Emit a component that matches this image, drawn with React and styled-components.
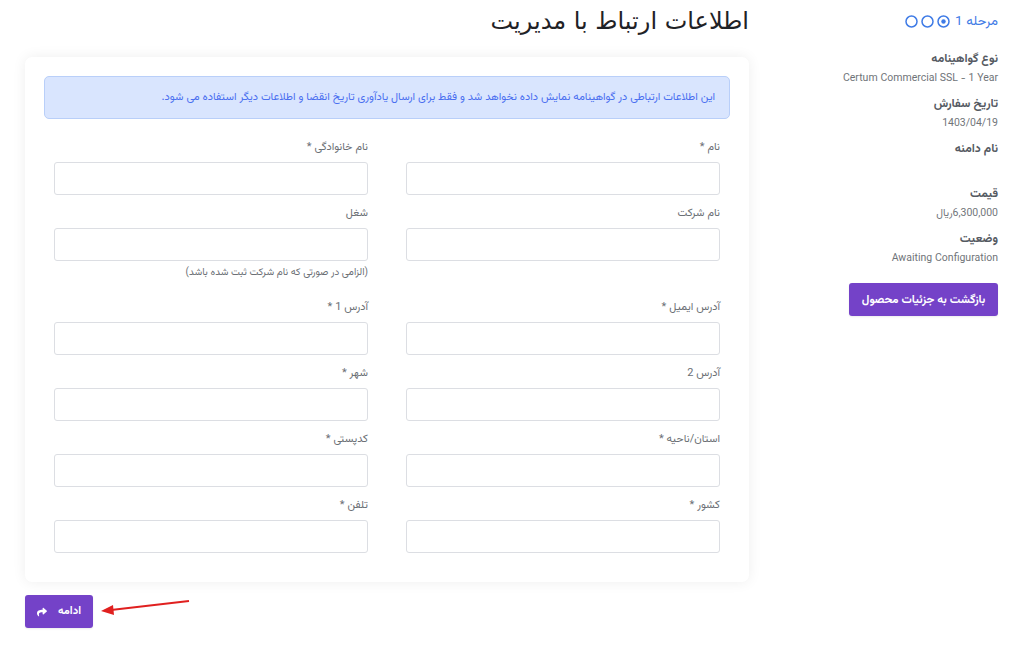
import React from "react";
import styled, { createGlobalStyle } from "styled-components";
import { FaShare } from "react-icons/fa";

const GlobalStyle = createGlobalStyle`
  html, body {
    margin: 0;
    padding: 0;
    background: #ffffff;
  }
  body {
    font-family: "Vazirmatn", "Noto Sans", "Noto Sans Arabic", "DejaVu Sans", sans-serif;
  }
  * {
    box-sizing: border-box;
  }
`;

const Page = styled.div`
  direction: rtl;
  display: grid;
  grid-template-columns: 220px 724px;
  column-gap: 29px;
  padding: 0 26px 0 25px;
  width: 1024px;
  height: 654px;
`;

const Sidebar = styled.aside`
  display: flex;
  flex-direction: column;
  align-items: flex-start;
  padding-top: 11px;
`;

const Step = styled.div`
  display: flex;
  align-items: center;
  gap: 3px;
  color: #3f7be6;
  font-size: 13.5px;
  height: 20px;
  margin-bottom: 19px;
`;

const Circles = styled.span`
  display: flex;
  gap: 3px;
  margin-right: 2px;
`;

const InfoGroup = styled.div`
  display: flex;
  flex-direction: column;
  margin-bottom: 7px;
`;

const InfoLabel = styled.div`
  font-size: 12px;
  font-weight: 700;
  color: #555a62;
  line-height: 19px;
`;

const InfoValue = styled.div`
  font-size: 10.5px;
  color: #707479;
  line-height: 19px;
  min-height: 19px;
`;

const PurpleButton = styled.button`
  display: flex;
  align-items: center;
  justify-content: center;
  gap: ${(p) => (p.$small ? "11px" : "0")};
  background: #7442c8;
  color: #ffffff;
  border: none;
  border-radius: 3px;
  font-family: inherit;
  font-size: 11px;
  font-weight: 700;
  height: 33px;
  padding: ${(p) => (p.$small ? "0 12px" : "0 12px")};
  cursor: pointer;
  box-shadow: 0 1px 2px rgba(0, 0, 0, 0.08);
`;

const SideButton = styled(PurpleButton)`
  width: 149px;
  margin-top: 8px;
  font-size: 11.5px;
`;

const Main = styled.main`
  display: flex;
  flex-direction: column;
`;

const Title = styled.h1`
  margin: 0;
  height: 57px;
  padding-top: 5px;
  font-family: "DejaVu Sans", "Noto Sans", sans-serif;
  font-weight: 400;
  font-size: 24px;
  color: #1f2226;
  line-height: 32px;
`;

const Card = styled.section`
  background: #ffffff;
  border-radius: 7px;
  box-shadow: 0 0 14px rgba(0, 0, 0, 0.07);
  padding: 19px 19px 17px;
`;

const Alert = styled.div`
  background: #d9e5fe;
  border: 1px solid #b9cff9;
  border-radius: 5px;
  color: #4a6ff0;
  font-size: 11px;
  height: 43px;
  display: flex;
  align-items: center;
  padding: 0 14px;
  margin-bottom: 22px;
`;

const FormGrid = styled.div`
  display: grid;
  grid-template-columns: 314px 314px;
  column-gap: 38px;
  padding: 0 10px;
`;

const Field = styled.div`
  display: flex;
  flex-direction: column;
  padding-bottom: 12px;
`;

const Label = styled.label`
  font-size: 11px;
  color: #6b6f75;
  line-height: 14px;
  height: 14px;
  margin-bottom: 7px;
`;

const Input = styled.input`
  height: 33px;
  width: 100%;
  border: 1px solid #dcdee3;
  border-radius: 3px;
  background: #ffffff;
  font-family: inherit;
  font-size: 12px;
  padding: 0 10px;
  outline: none;
`;

const Help = styled.div`
  font-size: 10px;
  color: #6b6f75;
  line-height: 14px;
  margin-top: 5px;
  height: 23px;
`;

const Footer = styled.div`
  direction: ltr;
  display: flex;
  align-items: center;
  margin-top: 13px;
  gap: 6px;
`;

const Arrow = styled.svg`
  display: block;
  margin-top: -6px;
`;

function Ring({ dot }) {
  return (
    <svg width="13" height="13" viewBox="0 0 13 13">
      <circle cx="6.5" cy="6.5" r="5.5" fill="none" stroke="#3f7be6" strokeWidth="1.5" />
      {dot && <circle cx="6.5" cy="6.5" r="2.2" fill="#3f7be6" />}
    </svg>
  );
}

const fields = [
  ["نام *", "نام خانوادگی *"],
  ["نام شرکت", "شغل"],
  ["آدرس ایمیل *", "آدرس 1 *"],
  ["آدرس 2", "شهر *"],
  ["استان/ناحیه *", "کدپستی *"],
  ["کشور *", "تلفن *"],
];

const info = [
  ["نوع گواهینامه", "Certum Commercial SSL - 1 Year"],
  ["تاریخ سفارش", "1403/04/19"],
  ["نام دامنه", ""],
  ["قیمت", "6,300,000ریال"],
  ["وضعیت", "Awaiting Configuration"],
];

export default function App() {
  return (
    <>
      <GlobalStyle />
      <Page>
        <Sidebar>
          <Step>
            <span>مرحله 1</span>
            <Circles>
              <Ring dot />
              <Ring />
              <Ring />
            </Circles>
          </Step>
          {info.map(([l, v]) => (
            <InfoGroup key={l}>
              <InfoLabel>{l}</InfoLabel>
              <InfoValue>{v}</InfoValue>
            </InfoGroup>
          ))}
          <SideButton>بازگشت به جزئیات محصول</SideButton>
        </Sidebar>

        <Main>
          <Title>اطلاعات ارتباط با مدیریت</Title>
          <Card>
            <Alert>
              این اطلاعات ارتباطی در گواهینامه نمایش داده نخواهد شد و فقط برای ارسال یادآوری تاریخ انقضا و اطلاعات دیگر استفاده می شود.
            </Alert>
            <FormGrid>
              {fields.map(([a, b], i) => (
                <React.Fragment key={a}>
                  <Field>
                    <Label>{a}</Label>
                    <Input type="text" />
                  </Field>
                  <Field>
                    <Label>{b}</Label>
                    <Input type="text" />
                    {i === 1 && <Help>(الزامی در صورتی که نام شرکت ثبت شده باشد)</Help>}
                  </Field>
                </React.Fragment>
              ))}
            </FormGrid>
          </Card>
          <Footer>
            <PurpleButton $small>
              <FaShare size={10} />
              <span>ادامه</span>
            </PurpleButton>
            <Arrow width="92" height="20" viewBox="0 0 92 20">
              <line x1="90" y1="2" x2="12" y2="11" stroke="#e0201f" strokeWidth="2" />
              <polygon points="2,12 14,6 15,16" fill="#e0201f" />
            </Arrow>
          </Footer>
        </Main>
      </Page>
    </>
  );
}
